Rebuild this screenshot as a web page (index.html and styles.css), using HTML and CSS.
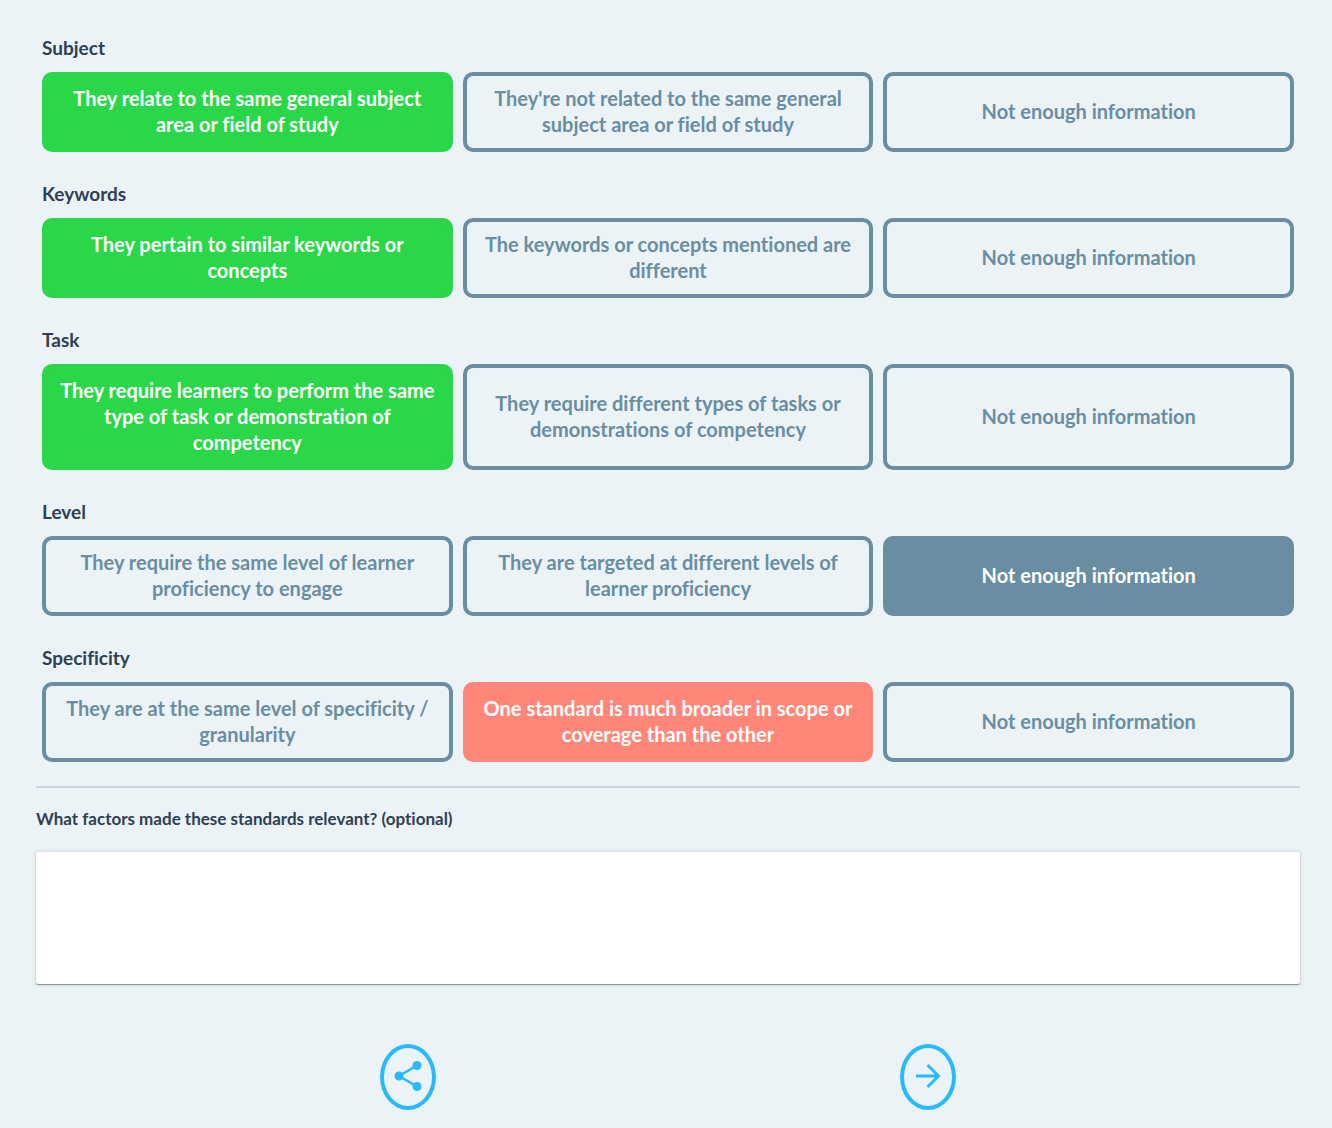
FILE: index.html
```html
<!DOCTYPE html>
<html lang="en">
<head>
<meta charset="utf-8">
<meta name="viewport" content="width=device-width, initial-scale=1">
<title>Compare standards</title>
<link rel="stylesheet" href="styles.css">
</head>
<body>
<main class="page">
  <div class="factors">
    <section class="factor" role="group" aria-labelledby="subject">
      <h2 class="factor-title" id="subject">Subject</h2>
      <div class="choices">
        <button type="button" class="choice choice-yes" aria-pressed="true">They relate to the same general subject area or field of study</button>
        <button type="button" class="choice" aria-pressed="false">They're not related to the same general subject area or field of study</button>
        <button type="button" class="choice" aria-pressed="false">Not enough information</button>
      </div>
    </section>
    <section class="factor" role="group" aria-labelledby="keywords">
      <h2 class="factor-title" id="keywords">Keywords</h2>
      <div class="choices">
        <button type="button" class="choice choice-yes" aria-pressed="true">They pertain to similar keywords or concepts</button>
        <button type="button" class="choice" aria-pressed="false">The keywords or concepts mentioned are different</button>
        <button type="button" class="choice" aria-pressed="false">Not enough information</button>
      </div>
    </section>
    <section class="factor" role="group" aria-labelledby="task">
      <h2 class="factor-title" id="task">Task</h2>
      <div class="choices">
        <button type="button" class="choice choice-yes" aria-pressed="true">They require learners to perform the same type of task or demonstration of competency</button>
        <button type="button" class="choice" aria-pressed="false">They require different types of tasks or demonstrations of competency</button>
        <button type="button" class="choice" aria-pressed="false">Not enough information</button>
      </div>
    </section>
    <section class="factor" role="group" aria-labelledby="level">
      <h2 class="factor-title" id="level">Level</h2>
      <div class="choices">
        <button type="button" class="choice" aria-pressed="false">They require the same level of learner proficiency to engage</button>
        <button type="button" class="choice" aria-pressed="false">They are targeted at different levels of learner proficiency</button>
        <button type="button" class="choice choice-unknown" aria-pressed="true">Not enough information</button>
      </div>
    </section>
    <section class="factor" role="group" aria-labelledby="specificity">
      <h2 class="factor-title" id="specificity">Specificity</h2>
      <div class="choices">
        <button type="button" class="choice" aria-pressed="false">They are at the same level of specificity / granularity</button>
        <button type="button" class="choice choice-no" aria-pressed="true">One standard is much broader in scope or coverage than the other</button>
        <button type="button" class="choice" aria-pressed="false">Not enough information</button>
      </div>
    </section>
  </div>
  <hr class="divider">
  <label class="comment-label" for="comment">What factors made these standards relevant? (optional)</label>
  <textarea class="comment" id="comment"></textarea>
  <div class="actions">
    <button type="button" class="round-button" aria-label="Share">
      <svg class="icon" viewBox="0 0 32 32" aria-hidden="true">
        <path d="M25 5.500 7 16l18 10.500" fill="none" stroke="currentColor" stroke-width="2.600"/>
        <circle cx="25" cy="5.500" r="4.500" fill="currentColor"/>
        <circle cx="7" cy="16" r="4.500" fill="currentColor"/>
        <circle cx="25" cy="26.500" r="4.500" fill="currentColor"/>
      </svg>
    </button>
    <button type="button" class="round-button" aria-label="Next">
      <svg class="icon" viewBox="0 0 32 32" aria-hidden="true">
        <path d="M4 16h22M15.500 5l11 11-11 11" fill="none" stroke="currentColor" stroke-width="3"/>
      </svg>
    </button>
  </div>
</main>
</body>
</html>
```
FILE: styles.css
```css
* {
  box-sizing: border-box;
}

body {
  margin: 0;
  background: #ebf3f7;
  color: #2e4053;
  font-family: Lato, "Open Sans", sans-serif;
  font-weight: 700;
  font-variant-ligatures: no-common-ligatures;
}

.page {
  padding: 36px 32px 18px 36px;
}

.factors {
  display: flex;
  flex-direction: column;
  gap: 30px;
  padding: 0 6px;
}

.factor {
  display: flex;
  flex-direction: column;
  gap: 12px;
}

.factor-title {
  margin: 0;
  font-size: 19px;
  font-weight: 700;
  line-height: 24px;
}

.choices {
  display: grid;
  grid-template-columns: repeat(3, 1fr);
  gap: 10px;
}

.choice {
  padding: 9px 10px 11px;
  border: 4px solid #698ea2;
  border-radius: 10px;
  background: transparent;
  color: #698ea2;
  font: inherit;
  font-size: 20px;
  font-variant-ligatures: inherit;
  line-height: 26px;
  text-align: center;
  cursor: pointer;
}

.choice-yes {
  border-color: #29d748;
  background: #29d748;
  color: #fff;
}

.choice-no {
  border-color: #ff8679;
  background: #ff8679;
  color: #fff;
}

.choice-unknown {
  background: #698ea2;
  color: #fff;
}

.divider {
  height: 2px;
  margin: 24px 0 20px;
  border: 0;
  background: #ced4d9;
}

.comment-label {
  display: block;
  margin-bottom: 22px;
  font-size: 17px;
  line-height: 22px;
}

.comment {
  display: block;
  width: 100%;
  height: 132px;
  padding: 12px;
  border: 0;
  border-radius: 2px;
  background: #fff;
  box-shadow: 0 1px 1px rgba(0, 0, 0, 0.4), 0 0 4px rgba(0, 0, 0, 0.15);
  color: inherit;
  font: inherit;
  resize: none;
}

.actions {
  display: grid;
  grid-template-columns: 1fr 1fr;
  justify-items: center;
  margin-top: 60px;
  padding: 0 112px;
}

.round-button {
  display: flex;
  align-items: center;
  justify-content: center;
  width: 56px;
  height: 66px;
  padding: 0 0 2px;
  border: 4px solid #29b9ff;
  border-radius: 50%;
  background: transparent;
  color: #29b9ff;
  cursor: pointer;
}

.icon {
  width: 32px;
  height: 32px;
}
```
